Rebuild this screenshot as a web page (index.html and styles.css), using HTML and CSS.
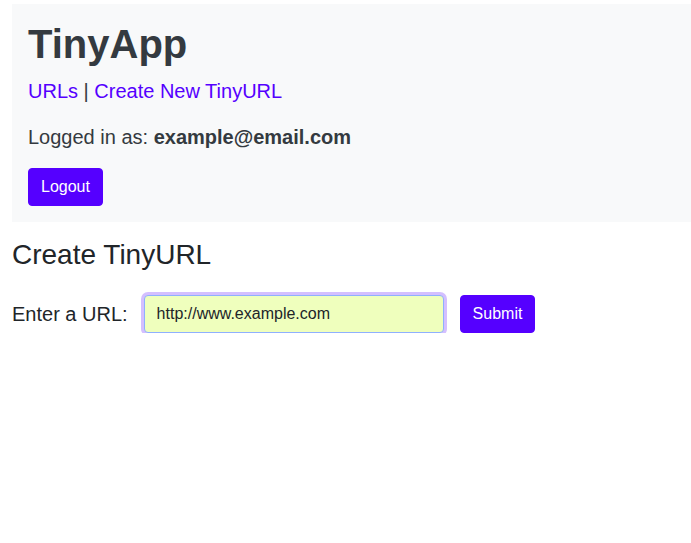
FILE: index.html
```html
<!DOCTYPE html>
<html lang="en">
<head>
<meta charset="utf-8">
<title>TinyApp</title>
<link rel="stylesheet" href="styles.css">
</head>
<body>
<div class="page">
  <header class="jumbo">
    <h1 class="title">TinyApp</h1>
    <nav class="nav"><a href="#">URLs</a> | <a href="#">Create New TinyURL</a></nav>
    <p class="login">Logged in as: <strong>example@email.com</strong></p>
    <button class="btn" type="button">Logout</button>
  </header>
  <main>
    <h3 class="heading">Create TinyURL</h3>
    <form class="url-form">
      <label class="url-label" for="longURL">Enter a URL:</label>
      <input class="url-input" id="longURL" type="text" value="http://www.example.com" autofocus>
      <button class="btn" type="button">Submit</button>
    </form>
  </main>
</div>
</body>
</html>
```

FILE: styles.css
```css
* { box-sizing: border-box; }
html, body {
  margin: 0;
  padding: 0;
  background: #fff;
}
body {
  font-family: "Liberation Sans", Arial, sans-serif;
  font-size: 16px;
  line-height: 1.5;
  color: #212529;
}
.page {
  padding: 4px 0 0 12px;
}
.jumbo {
  background: #f8f9fa;
  padding: 16px;
  color: #343a40;
}
.title {
  margin: 0 0 8px;
  font-size: 40px;
  line-height: 1.2;
  font-weight: 700;
}
.nav {
  font-size: 20px;
  line-height: 30px;
  color: #343a40;
  margin: 0 0 16px;
}
.nav a {
  color: #5500ff;
  text-decoration: none;
}
.login {
  margin: 0 0 16px;
  font-size: 20px;
  line-height: 30px;
}
.login strong { font-weight: 700; }
.btn {
  display: inline-block;
  font-family: "Liberation Sans", Arial, sans-serif;
  font-size: 16px;
  line-height: 24px;
  padding: 6px 12px;
  color: #fff;
  background: #5500ff;
  border: 1px solid #5500ff;
  border-radius: 4px;
  cursor: pointer;
}
.heading {
  margin: 16px 0 8px;
  font-size: 28px;
  line-height: 1.2;
  font-weight: 500;
  color: #212529;
}
.url-form {
  display: flex;
  align-items: center;
  margin-top: 23px;
}
.url-label {
  font-size: 20px;
  line-height: 30px;
  margin-right: 16px;
}
.url-input {
  width: 300px;
  height: 38px;
  padding: 6px 12px;
  font-family: "Liberation Sans", Arial, sans-serif;
  font-size: 16px;
  line-height: 24px;
  color: #212529;
  background: #efffbd;
  border: 1px solid #8fb0ff;
  border-radius: 4px;
  box-shadow: 0 0 0 3px rgba(85, 0, 255, 0.25);
  outline: none;
  margin-right: 16px;
}
```
